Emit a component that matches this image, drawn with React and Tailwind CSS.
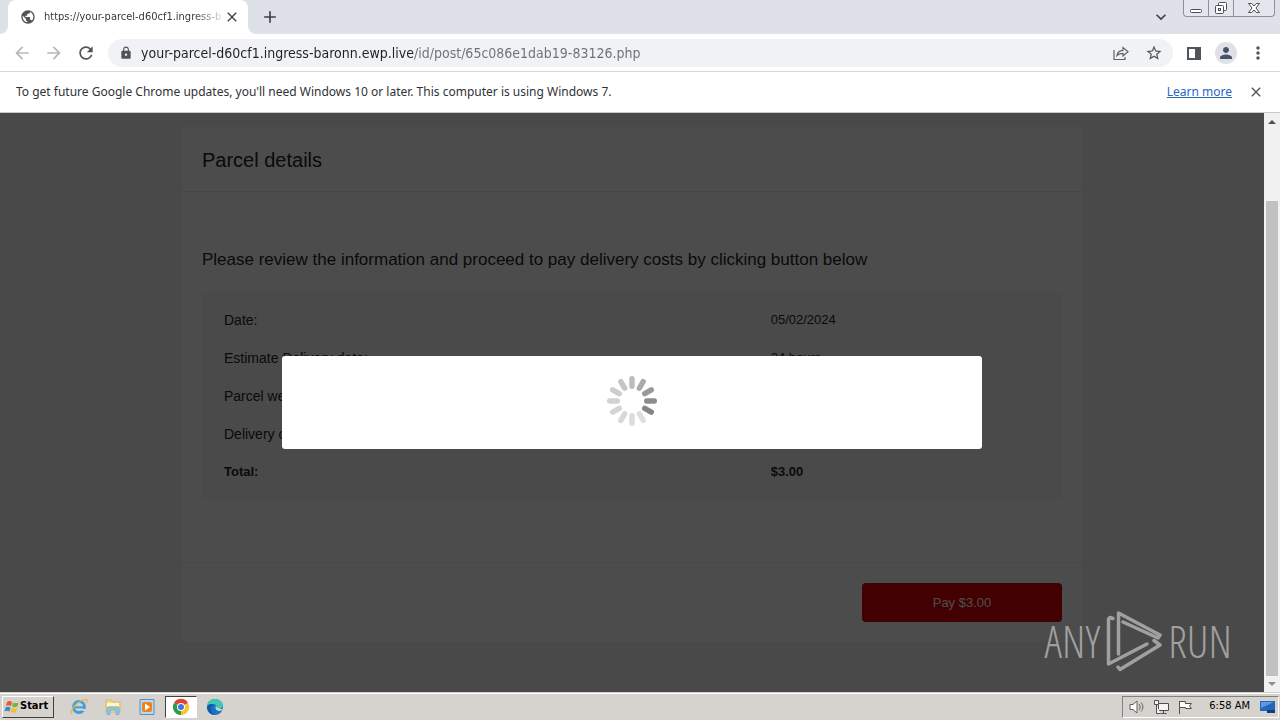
import {
  MdAdd,
  MdArrowBack,
  MdArrowForward,
  MdClose,
  MdExpandMore,
  MdLock,
  MdMoreVert,
  MdPerson,
  MdPublic,
  MdRefresh,
  MdStarBorder,
} from "react-icons/md";

const url = "your-parcel-d60cf1.ingress-baronn.ewp.live/id/post/65c086e1dab19-83126.php";

const rows = [
  { label: "Date:", value: "05/02/2024" },
  { label: "Estimate Delivery date:", value: "24 hours" },
  { label: "Parcel weight:", value: "1 kg" },
  { label: "Delivery costs:", value: "$3.00" },
  { label: "Total:", value: "$3.00", total: true },
];

// one grey per spoke, clockwise from the top
const spokes = [
  "#bdbdbd", "#ababab", "#999999", "#8c8c8c", "#858585", "#dedede",
  "#dcdcdc", "#d8d8d8", "#d5d5d5", "#d2d2d2", "#cdcdcd", "#c5c5c5",
];

function WindowButtons() {
  return (
    <div className="flex h-[17px] self-start rounded-b border border-t-0 border-[#8b919b] bg-[#e3e6ec] text-[#4a4e57]">
      <button aria-label="Minimize" className="flex w-[25px] items-center justify-center border-r border-[#8b919b]">
        <svg viewBox="0 0 14 14" className="h-3.5 w-3.5" fill="white" stroke="currentColor">
          <rect x="1.5" y="8.5" width="11" height="3" rx="1" />
        </svg>
      </button>
      <button aria-label="Restore" className="flex w-[25px] items-center justify-center border-r border-[#8b919b]">
        <svg viewBox="0 0 14 14" className="h-3.5 w-3.5" fill="white" stroke="currentColor">
          <rect x="4.5" y="1.5" width="8" height="8" rx="1" />
          <rect x="1.5" y="4.5" width="8" height="8" rx="1" />
          <rect x="4.5" y="7.5" width="2" height="2" />
        </svg>
      </button>
      <button aria-label="Close window" className="flex w-10 items-center justify-center">
        <svg viewBox="0 0 14 14" className="h-3.5 w-3.5" fill="white" stroke="currentColor">
          <path d="M1.5 2.5h3.2L7 5l2.300-2.500h3.200L9 7l3.500 4.500H9.300L7 9l-2.300 2.500H1.500L5 7z" />
        </svg>
      </button>
    </div>
  );
}

function TabStrip() {
  return (
    <div className="flex h-[34px] items-center bg-[#dee1e8] pr-[5px]">
      <div className="h-full w-2 bg-white">
        <div className="h-full rounded-br-lg bg-[#dee1e8]" />
      </div>
      <div className="flex h-full w-60 items-center rounded-t-lg bg-white pr-2 pl-3">
        <MdPublic className="h-4 w-4 shrink-0 text-[#50545a]" />
        <span className="ml-2 bg-[linear-gradient(to_right,#303236_150px,#30323633_176px)] bg-clip-text text-[11px] whitespace-nowrap text-transparent">
          https://your-parcel-d60cf1.ingress-b
        </span>
        <button aria-label="Close tab" className="ml-auto">
          <MdClose className="h-4 w-4 text-[#3c4043]" />
        </button>
      </div>
      <div className="h-full w-2 bg-white">
        <div className="h-full rounded-bl-lg bg-[#dee1e8]" />
      </div>
      <button aria-label="New tab" className="ml-1">
        <MdAdd className="h-5 w-5 text-[#3c4043]" />
      </button>
      <button aria-label="Search tabs" className="mr-3 ml-auto">
        <MdExpandMore className="h-5 w-5 text-[#3c4043]" />
      </button>
      <WindowButtons />
    </div>
  );
}

function Toolbar() {
  return (
    <div className="flex h-[38px] items-center border-b border-[#d5d7da] bg-white pr-3 pl-3">
      <div className="flex gap-3">
        <button aria-label="Back">
          <MdArrowBack className="h-5 w-5 text-[#b5b8bc]" />
        </button>
        <button aria-label="Forward">
          <MdArrowForward className="h-5 w-5 text-[#b5b8bc]" />
        </button>
        <button aria-label="Reload">
          <MdRefresh className="h-5 w-5 text-[#505459]" />
        </button>
      </div>
      <div className="ml-3 flex h-7 flex-1 items-center rounded-full bg-[#f0f2f5] pr-2.5 pl-[11px]">
        <MdLock className="h-3.5 w-3.5 shrink-0 text-[#505459]" />
        <input
          aria-label="Address"
          readOnly
          value={url}
          className="ml-2 min-w-0 flex-1 bg-[linear-gradient(to_right,#202124_273px,#6b6f75_273px)] bg-clip-text text-sm text-transparent outline-none"
        />
        <button aria-label="Share">
          <svg viewBox="0 0 16 16" className="h-4 w-4" fill="none" stroke="#5f6368" strokeWidth="1.200">
            <path d="M1 5v9.500h11V12" />
            <path d="M4 10.500c.5-3.500 2.500-5 6-5.200V2.500L15 6.700 10 11V8.300c-2.600 0-4.500.6-6 2.200z" />
          </svg>
        </button>
        <button aria-label="Bookmark" className="ml-4">
          <MdStarBorder className="h-[18px] w-[18px] text-[#505459]" />
        </button>
      </div>
      <button aria-label="Side panel" className="ml-3">
        <svg viewBox="0 0 18 18" className="h-[18px] w-[18px]">
          <path fill="#505459" d="M2 3h14v13H2zM4 5v9h6V5z" fillRule="evenodd" />
        </svg>
      </button>
      <button aria-label="Profile" className="ml-3 flex h-[22px] w-[22px] items-center justify-center rounded-full bg-[#dee1e6]">
        <MdPerson className="h-[18px] w-[18px] text-[#47526b]" />
      </button>
      <button aria-label="Menu" className="ml-[11px]">
        <MdMoreVert className="h-5 w-5 text-[#505459]" />
      </button>
    </div>
  );
}

function InfoBar() {
  return (
    <div className="flex h-[41px] items-center border-b border-[#c8c8c8] bg-white px-4 font-['Noto_Sans',sans-serif] text-xs text-[#303236]">
      <p>
        To get future Google Chrome updates, you'll need Windows 10 or later. This computer is using Windows 7.
      </p>
      <a href="#" className="ml-auto text-[#2967c4] underline">
        Learn more
      </a>
      <button aria-label="Dismiss" className="ml-4">
        <MdClose className="h-4 w-4 text-[#505459]" />
      </button>
    </div>
  );
}

function ParcelPage() {
  return (
    <div className="h-full bg-[#f3f3f3] px-5 pt-3.5 font-['Liberation_Sans',Arial,sans-serif] text-[#262626]">
      <div className="mx-auto max-w-[900px] rounded bg-white">
        <h1 className="border-b border-[#e6e6e6] px-5 pt-[21px] pb-[19px] text-xl leading-6">Parcel details</h1>
        <div className="px-5 pt-14 pb-[62px]">
          <h2 className="text-[17px] leading-6">
            Please review the information and proceed to pay delivery costs by clicking button below
          </h2>
          <div className="mt-5 bg-[#f8f8f8] px-[22px] py-[9px]">
            <table className="w-full table-fixed text-sm">
              <tbody>
                {rows.map((row) => (
                  <tr key={row.label} className={row.total ? "h-[38px] text-[13px] font-bold" : "h-[38px] font-normal"}>
                    <th scope="row" className="w-[67%] text-left [font-weight:inherit]">
                      {row.label}
                    </th>
                    <td className="text-[13px]">{row.value}</td>
                  </tr>
                ))}
              </tbody>
            </table>
          </div>
        </div>
        <div className="flex justify-end border-t border-[#f0f0f0] p-5">
          <button className="h-[39px] w-[200px] rounded bg-[#e20000] text-[13px] text-white">Pay $3.00</button>
        </div>
      </div>
    </div>
  );
}

function Spinner() {
  return (
    <svg viewBox="-25 -25 50 50" className="h-[50px] w-[50px]" role="status" aria-label="Loading">
      {spokes.map((color, i) => (
        <rect key={i} x="-2.700" y="-25" width="5.400" height="13" rx="2.700" fill={color} transform={`rotate(${i * 30})`} />
      ))}
    </svg>
  );
}

function Watermark() {
  return (
    <div className="absolute right-8 bottom-5 flex items-center gap-1.5 font-['Open_Sans_Condensed_Light','Noto_Sans_ExtraCondensed_Light','Noto_Sans_ExtraCondensed','Roboto_Condensed_Light','Open_Sans_Condensed',sans-serif] text-[44px] leading-none font-light text-[#a0a0a0]">
      <span>ANY</span>
      <svg viewBox="0 0 56 62" className="h-[62px] w-14" fill="none" stroke="currentColor" strokeWidth="3.500" strokeLinejoin="round" strokeLinecap="round">
        <path d="M7 8.500 4 7.500 2.500 9v45L41 34" />
        <path d="M12.500 44V3L54 25l-2 3-35-16" />
        <path d="M48 30.500 54 35 14 59.500l-2-2.500" />
      </svg>
      <span>RUN</span>
    </div>
  );
}

function Scrollbar() {
  return (
    <div className="flex w-4 flex-col items-center bg-[#f1f1f1]">
      <svg viewBox="0 0 16 16" className="h-4 w-4 shrink-0" fill="#505050">
        <path d="M4 11h8L8 7z" />
      </svg>
      <div className="mt-[72px] w-3 flex-1 bg-[#c1c1c1]" />
      <svg viewBox="0 0 16 16" className="h-4 w-4 shrink-0" fill="#909090">
        <path d="M4 6h8l-4 4z" />
      </svg>
    </div>
  );
}

function ExplorerIcon() {
  return (
    <svg viewBox="0 0 18 18" className="h-[18px] w-[18px]">
      <circle cx="9" cy="9" r="5.500" fill="none" stroke="#3f9fe0" strokeWidth="2.800" />
      <path d="M5 9.300h9" stroke="#3f9fe0" strokeWidth="2" />
      <path d="M12 11h4v2h-4z" fill="#d6d3ce" />
      <path d="M2 16C-1 13 7 4 13 2s4 1 3 3" fill="none" stroke="#e9b93a" strokeWidth="1.300" />
    </svg>
  );
}

function FolderIcon() {
  return (
    <svg viewBox="0 0 18 18" className="h-[18px] w-[18px]">
      <path d="M2 2h5l1 2h8v10H2z" fill="#f3dc83" stroke="#d8bb62" />
      <path d="M3 5h12v3H3z" fill="#fff6cf" />
      <path d="M3 16.500V11q0-2 2-2h8q2 0 2 2v5.500h-3V12H6v4.500z" fill="#8cc8ea" stroke="#5f9fc8" strokeWidth=".6" />
    </svg>
  );
}

function MediaIcon() {
  return (
    <svg viewBox="0 0 18 18" className="h-[18px] w-[18px]">
      <path d="M2 1.500h14v15H2z" fill="#b6d8f3" stroke="#5790c2" />
      <rect x="4" y="4" width="10" height="10" rx="2" fill="#f08418" />
      <path d="m7 5.500 5 3.500-5 3.500z" fill="white" />
    </svg>
  );
}

function ChromeIcon() {
  return (
    <svg viewBox="-9 -9 18 18" className="h-[18px] w-[18px]">
      <path d="M0 0-7-4A8 8 0 0 1 7-4z" fill="#e24133" />
      <path d="M0 0 7-4A8 8 0 0 1 0 8z" fill="#f8c52c" />
      <path d="M0 0v8A8 8 0 0 1-7-4z" fill="#2b9c4c" />
      <circle r="4" fill="white" />
      <circle r="3" fill="#3c78d8" />
    </svg>
  );
}

function EdgeIcon() {
  return (
    <svg viewBox="0 0 18 18" className="h-[18px] w-[18px]">
      <circle cx="9" cy="9" r="8" fill="#1675c5" />
      <path d="M1 9C1 4 5 1 9 1s8 3 8 6c0 4-5 5-7 3 1-3-1-4-3-4-3 0-6 1-6 3z" fill="#43c7b0" />
      <path d="M10 8c-1 1-1 4 3 5 2 0 3-1 4-2-3 0-7-1-7-3z" fill="#d6d3ce" />
      <path d="M1 9c1-3 5-4 7-2-4 1-4 7 1 10-4 0-8-3-8-8z" fill="#1259a6" />
    </svg>
  );
}

function Taskbar() {
  return (
    <div className="flex h-7 items-center border-t border-[#d6d3ce] bg-[#d6d3ce] pr-px pl-0.5 shadow-[inset_0_1px_white]">
      <button className="flex h-[22px] w-[52px] items-center border border-t-white border-r-[#404040] border-b-[#404040] border-l-white pl-px text-[11px] font-bold text-black">
        <svg viewBox="0 0 16 16" className="h-4 w-4 shrink-0">
          <path d="M3 3c2-1.500 3-1.500 5 0L7 7C5 6 4 6 2 7z" fill="#ea5928" />
          <path d="M9 3.500c2 1 3 1 5.500 0l-1 4C11 8.500 10 8.500 8 7.500z" fill="#78b634" />
          <path d="M1.500 8.500c2-1 3-1 5 0l-1 4c-2-1.200-3-1-5 0z" fill="#3b85cf" />
          <path d="M7.500 9c2 1 3 1 5.500 0l-1 4c-2 1-3.500 1-5.500 0z" fill="#f5bc2b" />
        </svg>
        Start
      </button>
      <div className="ml-2 flex items-center">
        <button aria-label="Internet Explorer" className="flex h-[22px] w-[34px] items-center justify-center">
          <ExplorerIcon />
        </button>
        <button aria-label="Explorer" className="flex h-[22px] w-[34px] items-center justify-center">
          <FolderIcon />
        </button>
        <button aria-label="Media Player" className="flex h-[22px] w-[34px] items-center justify-center">
          <MediaIcon />
        </button>
        <button
          aria-label="Chrome"
          className="ml-px flex h-[22px] w-8 items-center justify-center border border-t-[#404040] border-r-white border-b-white border-l-[#404040] bg-white"
        >
          <ChromeIcon />
        </button>
        <button aria-label="Edge" className="flex h-[22px] w-9 items-center justify-center">
          <EdgeIcon />
        </button>
      </div>
      <div className="ml-auto flex h-[22px] items-center gap-2 border border-t-[#808080] border-r-white border-b-white border-l-[#808080] pr-0.5 pl-1.5 text-[11px] text-black">
        <svg viewBox="0 0 16 16" className="h-4 w-4" fill="white" stroke="#606060">
          <path d="M1 5.500h3L8 2v12l-4-3.500H1z" />
          <path d="M10 5c1.500 2 1.500 4 0 6M12 3.500c2.500 3 2.500 6 0 9" fill="none" />
        </svg>
        <svg viewBox="0 0 16 16" className="h-4 w-4" fill="#f5f5f5" stroke="#505050">
          <path d="M5.500 4.500h10v7h-10zM7.500 14.500h6M10.500 12v2" />
          <path d="M1.500 1.500h4v4h-4zM3.500 6v8.500h4" />
        </svg>
        <svg viewBox="0 0 16 16" className="h-4 w-4" fill="white" stroke="#505050">
          <path d="M2.500 15V2" />
          <path d="M2.500 2.500h6v2h6l-2 2.500 2 2.500h-6v-1h-6z" />
        </svg>
        <span className="ml-2">6:58 AM</span>
        <svg viewBox="0 0 16 16" className="ml-0.5 h-4 w-4">
          <path d="M0 2h15v10H0z" fill="#2467ba" />
          <path d="M1 3h13L1 9z" fill="#5b9be0" />
          <path d="M7 11h8v3H7z" fill="#173d78" />
        </svg>
      </div>
    </div>
  );
}

export default function App() {
  return (
    <div className="flex h-screen flex-col overflow-hidden font-['DejaVu_Sans_Condensed','DejaVu_Sans',Tahoma,sans-serif]">
      <header>
        <TabStrip />
        <Toolbar />
        <InfoBar />
      </header>
      <div className="flex min-h-0 flex-1">
        <main className="relative min-w-0 flex-1 overflow-hidden">
          <ParcelPage />
          <div className="absolute inset-0 flex items-center justify-center bg-black/70 px-5">
            <div role="dialog" aria-label="Processing" className="flex w-full max-w-[700px] justify-center rounded-[3px] bg-white pt-5 pb-[23px]">
              <Spinner />
            </div>
          </div>
          <Watermark />
        </main>
        <Scrollbar />
      </div>
      <Taskbar />
    </div>
  );
}
